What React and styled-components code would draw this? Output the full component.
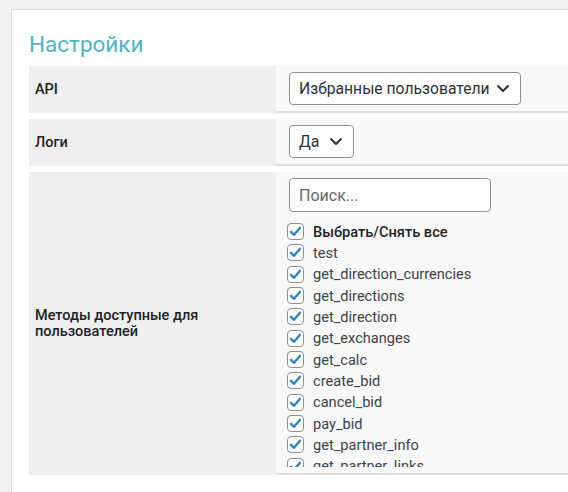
import React from "react";
import styled, { createGlobalStyle } from "styled-components";

const Global = createGlobalStyle`
  html, body { margin: 0; padding: 0; overflow: hidden; }
  body {
    background: #f0f0f0;
    font-family: Roboto, "Liberation Sans", sans-serif;
    color: #1d2327;
  }
`;

const Page = styled.div`
  padding: 9px 0 0 11px;
  width: 640px;
`;

const Card = styled.div`
  background: #fff;
  border: 1px solid #dcdcde;
  padding: 19px 0 18px 17px;
`;

const Title = styled.h2`
  margin: 0 0 9px;
  font-size: 22.5px;
  line-height: 28px;
  font-weight: 400;
  color: #50b4c8;
  padding-top: 1px;
  height: 27px;
`;

const Form = styled.div`
  display: grid;
  grid-template-columns: 247px 1fr;
  row-gap: 6px;
`;

const Label = styled.div`
  background: #efefef;
  display: flex;
  align-items: center;
  padding: 0 20px 0 6px;
  font-size: 14.5px;
  font-weight: 500;
  line-height: 16px;
  color: #1d2327;
`;

const Value = styled.div`
  background: #f9f9f9;
  border-bottom: 2px solid #dddddd;
  padding: 6px 13px;
  display: flex;
  flex-direction: column;
  align-items: flex-start;
`;

const SelectBox = styled.div`
  height: 33px;
  box-sizing: border-box;
  border: 1px solid #8c8f94;
  border-radius: 4px;
  background: #fff;
  display: flex;
  align-items: center;
  gap: ${(p) => p.$gap}px;
  padding: 0 10px 0 9px;
  font-size: 15.7px;
  color: #2c3338;
`;

const Chevron = () => (
  <svg width="14" height="9" viewBox="0 0 14 9" fill="none">
    <path d="M2 2l5 5 5-5" stroke="#2c3338" strokeWidth="2" strokeLinecap="round" strokeLinejoin="round" />
  </svg>
);

const Search = styled.input`
  width: 202px;
  height: 34px;
  box-sizing: border-box;
  border: 1px solid #8c8f94;
  border-radius: 4px;
  background: #fff;
  padding: 0 9px;
  font-family: Roboto, "Liberation Sans", sans-serif;
  font-size: 16px;
  color: #2c3338;
  outline: none;
  &::placeholder { color: #646970; }
`;

const List = styled.div`
  margin-top: 9px;
  height: 246px;
  overflow: hidden;
  margin-left: -2px;
`;

const Item = styled.label`
  display: flex;
  align-items: center;
  gap: 9px;
  height: 21.33px;
  font-size: 14.6px;
  color: #3c434a;
  font-weight: ${(p) => (p.$bold ? 500 : 400)};
  ${(p) => p.$bold && "color: #1d2327;"}
`;

const Box = styled.span`
  width: 17px;
  height: 17px;
  box-sizing: border-box;
  border: 1px solid #8c8f94;
  border-radius: 4px;
  background: #fff;
  display: flex;
  align-items: center;
  justify-content: center;
  flex-shrink: 0;
`;

const Check = () => (
  <Box>
    <svg width="13" height="13" viewBox="0 0 13 13" fill="none">
      <path d="M2 6.8l3 3 6-7" stroke="#3582c4" strokeWidth="2.4" strokeLinecap="round" strokeLinejoin="round" />
    </svg>
  </Box>
);

const methods = [
  "test",
  "get_direction_currencies",
  "get_directions",
  "get_direction",
  "get_exchanges",
  "get_calc",
  "create_bid",
  "cancel_bid",
  "pay_bid",
  "get_partner_info",
  "get_partner_links",
  "get_partner_exchanges",
];

export default function App() {
  return (
    <>
      <Global />
      <Page>
        <Card>
          <Title>Настройки</Title>
          <Form>
            <Label>API</Label>
            <Value>
              <SelectBox $gap={6}>
                Избранные пользователи
                <Chevron />
              </SelectBox>
            </Value>
            <Label>Логи</Label>
            <Value>
              <SelectBox $gap={10}>
                Да
                <Chevron />
              </SelectBox>
            </Value>
            <Label>Методы доступные для пользователей</Label>
            <Value>
              <Search placeholder="Поиск..." />
              <List>
                <Item $bold>
                  <Check />
                  Выбрать/Снять все
                </Item>
                {methods.map((m) => (
                  <Item key={m}>
                    <Check />
                    {m}
                  </Item>
                ))}
              </List>
            </Value>
          </Form>
        </Card>
      </Page>
    </>
  );
}
